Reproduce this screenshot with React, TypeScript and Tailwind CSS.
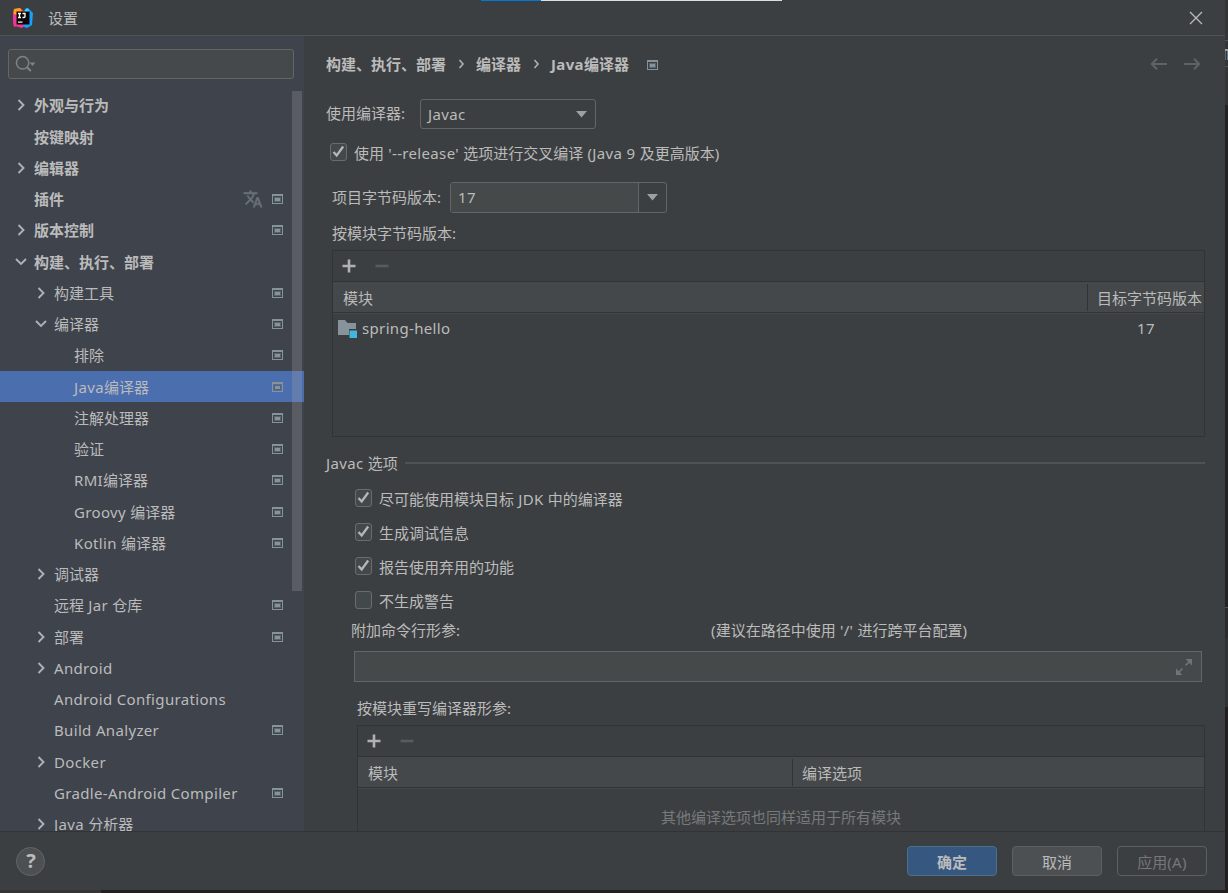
import type { ReactNode } from 'react'

interface TreeItem {
  label: string
  level: 0 | 1 | 2
  state?: 'open' | 'closed'
  project?: boolean
  translate?: boolean
  selected?: boolean
}

const TREE: TreeItem[] = [
  { label: '外观与行为', level: 0, state: 'closed' },
  { label: '按键映射', level: 0 },
  { label: '编辑器', level: 0, state: 'closed' },
  { label: '插件', level: 0, project: true, translate: true },
  { label: '版本控制', level: 0, state: 'closed', project: true },
  { label: '构建、执行、部署', level: 0, state: 'open' },
  { label: '构建工具', level: 1, state: 'closed', project: true },
  { label: '编译器', level: 1, state: 'open', project: true },
  { label: '排除', level: 2, project: true },
  { label: 'Java编译器', level: 2, project: true, selected: true },
  { label: '注解处理器', level: 2, project: true },
  { label: '验证', level: 2, project: true },
  { label: 'RMI编译器', level: 2, project: true },
  { label: 'Groovy 编译器', level: 2, project: true },
  { label: 'Kotlin 编译器', level: 2, project: true },
  { label: '调试器', level: 1, state: 'closed' },
  { label: '远程 Jar 仓库', level: 1, project: true },
  { label: '部署', level: 1, state: 'closed', project: true },
  { label: 'Android', level: 1, state: 'closed' },
  { label: 'Android Configurations', level: 1 },
  { label: 'Build Analyzer', level: 1, project: true },
  { label: 'Docker', level: 1, state: 'closed' },
  { label: 'Gradle-Android Compiler', level: 1, project: true },
  { label: 'Java 分析器', level: 1, state: 'closed' },
]

const INDENT = { 0: 'pl-[14px]', 1: 'pl-[34px]', 2: 'pl-[54px]' }

// Latin runs are tracked a little wider than the Chinese text around them.
function Text({ children, className }: { children: string; className?: string }) {
  return (
    <span className={className}>
      {children.split(/([A-Za-z0-9'()\- ]+)/).map((run, i) =>
        i % 2 ? (
          <span key={i} className="tracking-[0.34px]">
            {run}
          </span>
        ) : (
          run
        ),
      )}
    </span>
  )
}

function AppLogo() {
  return (
    <svg width="20" height="20" viewBox="0 0 20 20">
      <path d="M1 1l6-1 5 4-3 12-8 3L0 13l1-4-1-4z" fill="#fc3c5f" />
      <path d="M1 1l6-1 2 3-5 5-4 3z" fill="#fca01f" />
      <path d="M0 6l5 1-1 9-3 2-1-6z" fill="#f0359c" />
      <path d="M12 1l3-1 5 5-1 12-5 3-6-2 5-6z" fill="#18a0fb" />
      <path d="M11 3l3-3 2 2-1 6z" fill="#3dd0f5" />
      <path d="M2 18l6-2 4 1-3 3z" fill="#f0359c" />
      <rect x="3.5" y="3.5" width="13" height="13" fill="#0b0506" />
      <path d="M5 5.500h3M6.500 5.500v4M5 9.500h3M9.500 5.500h2.500v3q0 1-1 1h-1.500" stroke="#fff" strokeWidth="1.300" fill="none" />
      <rect x="5" y="13.500" width="4.500" height="1.200" fill="#fff" />
    </svg>
  )
}

function Chevron({ open }: { open: boolean }) {
  return (
    <svg width="14" height="14" viewBox="0 0 14 14" fill="none" stroke="#afb1b3" strokeWidth="1.9">
      <path d={open ? 'M2 4l5 5 5-5' : 'M4.500 2l5 5-5 5'} />
    </svg>
  )
}

function TranslateIcon() {
  return (
    <svg className="mr-[9px]" width="20" height="20" viewBox="0 0 24 24" fill="#68707a" stroke="#68707a" strokeWidth="0.600">
      <path d="M12.870 15.070l-2.540-2.510.030-.030A17.520 17.520 0 0 0 14.070 6H17V4h-7V2H8v2H1v1.990h11.170C11.500 7.920 10.440 9.750 9 11.350 8.070 10.320 7.300 9.190 6.690 8h-2c.730 1.630 1.730 3.170 2.980 4.560l-5.090 5.020L4 19l5-5 3.110 3.110.760-2.040zM18.500 10h-2L12 22h2l1.120-3h4.750L21 22h2l-4.500-12zm-2.620 7l1.620-4.330L19.120 17h-3.240z" />
    </svg>
  )
}

function ProjectIcon() {
  return (
    <svg width="11" height="10" viewBox="0 0 11 10" shapeRendering="crispEdges">
      <path d="M0 0h11v10H0zM1 2v7h9V2z" fill="#87939a" fillRule="evenodd" />
      <rect x="2" y="3" width="7" height="5" fill="#5b646c" />
      <rect x="3" y="4" width="5" height="3" fill="#87939a" />
    </svg>
  )
}

function Triangle() {
  return (
    <svg width="11" height="7" viewBox="0 0 11 7">
      <path d="M0 0h11L5.500 6.500z" fill="#9da0a3" />
    </svg>
  )
}

function Checkbox({ checked = false, children }: { checked?: boolean; children: string }) {
  return (
    <label className="flex items-center gap-[7px]">
      <span className="ml-px flex h-[18px] w-[17px] -translate-y-px items-center justify-center rounded-[3px] border border-[#6b6b6b] bg-[#43494a]">
        {checked && (
          <svg width="13" height="14" viewBox="0 0 13 14" fill="none" stroke="#b4b6b8" strokeWidth="2.300">
            <path d="M1.500 6.900l3.200 3.600L11.200 1.500" />
          </svg>
        )}
      </span>
      <Text>{children}</Text>
    </label>
  )
}

function ListToolbar() {
  return (
    <div className="flex h-[31px] shrink-0 items-center gap-[19px] border-b border-[#313335] pl-[9px]">
      <svg width="14" height="14" viewBox="0 0 14 14">
        <path d="M5.700 0.500h2.600v5.200h5.200v2.600H8.300v5.200H5.700V8.300H0.500V5.700h5.200z" fill="#afb1b3" />
      </svg>
      <svg width="14" height="14" viewBox="0 0 14 14">
        <rect x="0.500" y="5.700" width="13" height="2.600" fill="#595b5d" />
      </svg>
    </div>
  )
}

function Sidebar() {
  return (
    <aside className="relative flex w-[304px] shrink-0 flex-col overflow-hidden bg-[#3f434c] pt-[13px]">
      <div className="ml-2 flex h-[30px] w-[286px] shrink-0 items-center rounded-[3px] border border-[#646566] bg-[#45494a] pl-[6px]">
        <svg width="22" height="18" viewBox="0 0 22 18" fill="none">
          <circle cx="7.600" cy="7.800" r="6.200" stroke="#7c8488" strokeWidth="1.500" />
          <path d="M11.800 12l4 4" stroke="#7c8488" strokeWidth="2" />
          <path d="M14.500 7.500h6l-3 3.500z" fill="#7c8488" />
        </svg>
      </div>
      <ul className="mt-[10.750px] shrink-0">
        {TREE.map((item) => (
          <li
            key={item.label}
            className={`flex h-[31.250px] items-center pr-[21px] ${INDENT[item.level]} ${item.selected ? 'bg-[#4b6eaf]' : ''}`}
          >
            <span className="flex w-[20px] shrink-0">
              {item.state && <Chevron open={item.state === 'open'} />}
            </span>
            <Text className={item.level === 0 ? 'flex-1 font-semibold' : 'flex-1'}>{item.label}</Text>
            {item.translate && <TranslateIcon />}
            {item.project && <ProjectIcon />}
          </li>
        ))}
      </ul>
      <div className="absolute top-[55px] left-[292px] h-[500px] w-[10px] bg-[#a6a6a6]/25" />
    </aside>
  )
}

function Separator() {
  return (
    <svg className="mx-[11px]" width="8" height="12" viewBox="0 0 8 12" fill="none" stroke="#afb1b3" strokeWidth="1.600">
      <path d="M2.500 2L6 6l-3.500 4" />
    </svg>
  )
}

function Breadcrumbs() {
  return (
    <div className="flex h-[30px] shrink-0 items-center pr-[24px] pl-[22px] font-semibold">
      <span>构建、执行、部署</span>
      <Separator />
      <span>编译器</span>
      <Separator />
      <Text className="mr-[18px] font-bold">Java编译器</Text>
      <span className="pt-px">
        <ProjectIcon />
      </span>
      <div className="ml-auto flex gap-[17px] text-[#606264]">
        <svg width="17" height="12" viewBox="0 0 17 12" fill="none" stroke="currentColor" strokeWidth="2">
          <path d="M17 6H1.500M7 0.800L1.800 6 7 11.200" />
        </svg>
        <svg width="17" height="12" viewBox="0 0 17 12" fill="none" stroke="currentColor" strokeWidth="2">
          <path d="M0 6h15.500M10 0.800L15.200 6 10 11.200" />
        </svg>
      </div>
    </div>
  )
}

function ListFrame({ className, children }: { className: string; children: ReactNode }) {
  return (
    <div className={`h-[187px] shrink-0 border border-[#313335] ${className}`}>
      <ListToolbar />
      {children}
    </div>
  )
}

function BytecodeTable() {
  return (
    <ListFrame className="ml-[28px] w-[873px]">
      <div className="flex h-[31px] items-center border-b border-[#313335] bg-[#45484a]">
        <div className="flex-1 pt-px pl-[10px]">模块</div>
        <div className="h-[27px] w-[117px] overflow-hidden border-l border-[#313335] pt-[3px] pl-[9px] whitespace-nowrap">
          目标字节码版本
        </div>
      </div>
      <div className="flex h-[30px] items-center border-t border-[#45484a]">
        <svg className="ml-[5px]" width="19" height="18" viewBox="0 0 19 18">
          <path d="M0 0h7l2.500 3H18v6h-7v6H0z" fill="#87939a" />
          <rect x="11.500" y="10.500" width="7.500" height="7.500" fill="#40b6e0" />
        </svg>
        <Text className="ml-[5px] flex-1 pb-[2px]">spring-hello</Text>
        <Text className="w-[117px] pb-[2px] pl-px text-center">17</Text>
      </div>
    </ListFrame>
  )
}

function OverridesTable() {
  return (
    <ListFrame className="ml-[53px] w-[848px]">
      <div className="flex h-[31px] items-center border-b border-[#313335] bg-[#45484a]">
        <div className="w-[434px] pt-px pl-[10px]">模块</div>
        <div className="h-[27px] flex-1 border-l border-[#313335] pt-[3px] pl-[9px]">编译选项</div>
      </div>
      <div className="border-t border-[#45484a] pt-[17px] text-center text-[#77797b]">
        其他编译选项也同样适用于所有模块
      </div>
    </ListFrame>
  )
}

function CompilerSettings() {
  return (
    <main className="flex min-w-0 flex-1 flex-col overflow-hidden pt-[13px]">
      <Breadcrumbs />

      <div className="mt-[20px] flex h-[30px] shrink-0 items-center pl-[22px]">
        <span className="w-[94px] pb-[2px]">使用编译器:</span>
        <div className="flex h-[30px] w-[176px] items-center justify-between rounded-[3px] border border-[#646566] pr-[8px] pl-[7px]">
          <Text>Javac</Text>
          <Triangle />
        </div>
      </div>

      <div className="mt-[14px] flex h-[20px] shrink-0 items-center pl-[25px]">
        <Checkbox checked>使用 '--release' 选项进行交叉编译 (Java 9 及更高版本)</Checkbox>
      </div>

      <div className="mt-[19px] flex h-[31px] shrink-0 items-center pl-[28px]">
        <span className="w-[118px] pb-[2px]">项目字节码版本:</span>
        <div className="flex h-[31px] w-[217px] rounded-[3px] border border-[#646566]">
          <div className="flex flex-1 items-center rounded-l-[2px] bg-[#45494a] pb-[2px] pl-[7px]">
            <Text>17</Text>
          </div>
          <div className="flex w-[28px] items-center justify-center border-l border-[#646566]">
            <Triangle />
          </div>
        </div>
      </div>

      <div className="mt-[9px] h-[28px] shrink-0 pl-[28px]">按模块字节码版本:</div>
      <BytecodeTable />

      <div className="mt-[16px] flex h-[20px] shrink-0 items-center gap-[7px] pr-[20px] pl-[22px]">
        <Text>Javac 选项</Text>
        <div className="h-[2px] flex-1 bg-[#515253]" />
      </div>

      <div className="mt-[16px] flex shrink-0 flex-col gap-[14px] pl-[50px]">
        <div className="flex h-5 items-center">
          <Checkbox checked>尽可能使用模块目标 JDK 中的编译器</Checkbox>
        </div>
        <div className="flex h-5 items-center">
          <Checkbox checked>生成调试信息</Checkbox>
        </div>
        <div className="flex h-5 items-center">
          <Checkbox checked>报告使用弃用的功能</Checkbox>
        </div>
        <div className="flex h-5 items-center">
          <Checkbox>不生成警告</Checkbox>
        </div>
      </div>

      <div className="mt-[8px] mb-px flex h-[22px] shrink-0 items-center pl-[47px]">
        <span className="w-[360px]">附加命令行形参:</span>
        <Text>(建议在路径中使用 '/' 进行跨平台配置)</Text>
      </div>
      <div className="mt-[9px] ml-[50px] flex h-[31px] w-[848px] shrink-0 items-center justify-end border border-[#646566] bg-[#45494a] pr-[9px]">
        <svg width="16" height="16" viewBox="0 0 16 16" fill="#6e7477" stroke="#6e7477">
          <path d="M9.500 6.500l4-4M6.500 9.500l-4 4" strokeWidth="1.600" fill="none" />
          <path d="M9.500 0H16v6.500zM0 9.500V16h6.500z" stroke="none" />
        </svg>
      </div>

      <div className="mt-[15px] h-[28px] shrink-0 pl-[53px]">按模块重写编译器形参:</div>
      <OverridesTable />
    </main>
  )
}

// Sliver of the editor window that shows past the dialog's right edge.
function EditorEdge() {
  return (
    <div className="flex w-[3px] flex-col">
      <div className="h-[40px] bg-[#333536]" />
      <div className="h-px bg-[#505254]" />
      <div className="h-[8px] bg-[#333536]" />
      <div className="h-[2px] bg-[#a0a0a0]" />
      <div className="flex h-[9px] bg-[#333536]">
        <div className="w-px bg-[#7a5a48]" />
        <div className="ml-px w-px bg-[#5f7f9f]" />
      </div>
      <div className="h-[6px] bg-[#333536]" />
      <div className="h-px bg-[#505254]" />
      <div className="h-[38px] bg-[#333536]" />
      <div className="h-[502px] bg-[#232323]" />
      <div className="h-px bg-[#505254]" />
      <div className="h-[30px] bg-[#2b2b2b]" />
      <div className="h-[69px] bg-[#2f3336]" />
    </div>
  )
}

export default function App() {
  return (
    <div className="flex h-[893px] w-[1228px] flex-col overflow-hidden bg-[#231f20] font-['Noto_Sans','Noto_Sans_CJK_SC',sans-serif] text-[15px] leading-[22px] text-[#bbbbbb]">
      <div className="flex h-[890px]">
        <div className="flex w-[1225px] flex-col bg-[#3c3f41]">
          <header className="relative flex h-[36px] shrink-0 items-center border-b border-[#505354] pr-[22px] pl-[13px]">
            <div className="absolute top-0 left-[481px] flex h-px w-[301px] bg-[#dcdfdf]">
              <div className="w-[60px] bg-[#0078d7]" />
            </div>
            <AppLogo />
            <span className="ml-[15px] flex-1">设置</span>
            <svg width="14" height="14" viewBox="0 0 14 14" stroke="#bbbbbb" strokeWidth="1.300">
              <path d="M1 1l12 12M13 1L1 13" />
            </svg>
          </header>

          <div className="flex h-[795px] shrink-0">
            <Sidebar />
            <CompilerSettings />
          </div>

          <footer className="flex flex-1 items-center border-t border-[#313335] pr-[18px] pl-[16px]">
            <div className="flex size-[29px] items-center justify-center rounded-full border border-[#646566] bg-[#4c5052] pl-px text-[20px] font-bold">
              ?
            </div>
            <div className="ml-auto flex gap-[15px]">
              <button className="h-[30px] w-[90px] rounded-[4px] border border-[#4c708c] bg-[#365880] pt-px font-semibold">
                确定
              </button>
              <button className="h-[30px] w-[90px] rounded-[4px] border border-[#5e6060] bg-[#4c5052] pt-px">
                取消
              </button>
              <button className="h-[30px] w-[90px] rounded-[4px] border border-[#5e6060] pt-px text-[#777777]">
                <Text>应用(A)</Text>
              </button>
            </div>
          </footer>
        </div>
        <EditorEdge />
      </div>
      <div className="h-[3px] w-[101px] bg-[#353334]" />
    </div>
  )
}
